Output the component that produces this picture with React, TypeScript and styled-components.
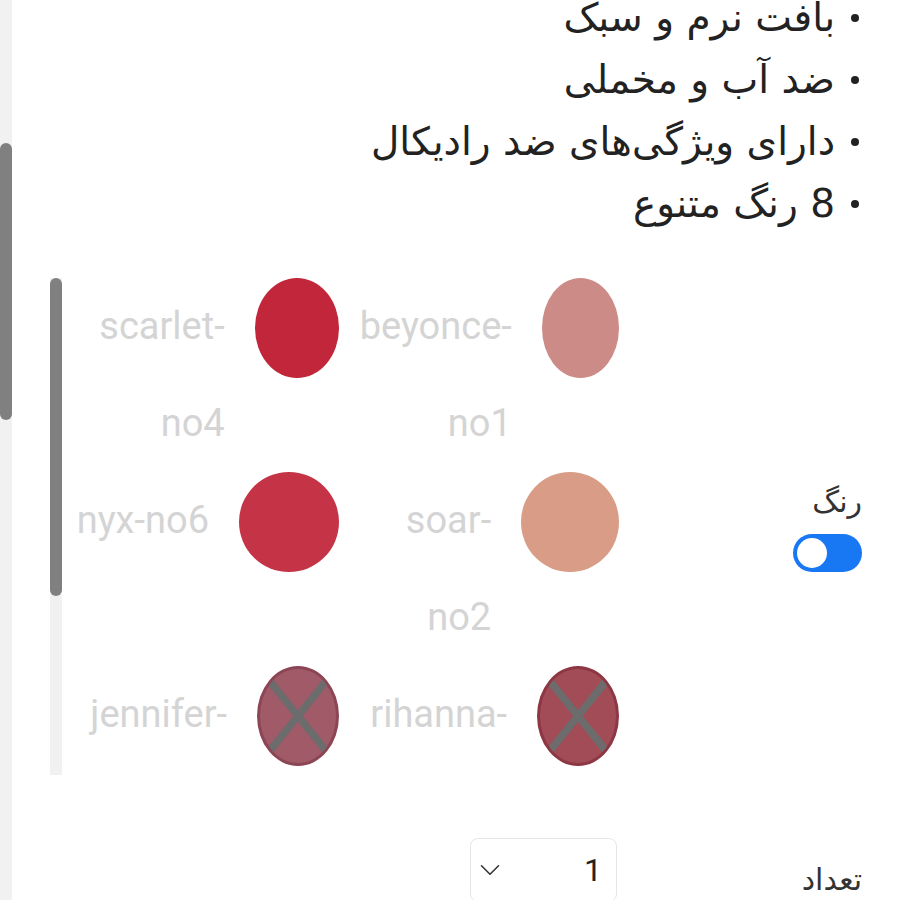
import React, { useCallback, useLayoutEffect, useRef, useState } from "react";
import styled, { createGlobalStyle, css } from "styled-components";
import { ChevronDown } from "lucide-react";

const GlobalStyle = createGlobalStyle`
  html, body {
    margin: 0;
    padding: 0;
    height: 100%;
    overflow: hidden;
    background: #ffffff;
  }
  #root { height: 100%; }
  *, *::before, *::after { box-sizing: border-box; }
`;

const hiddenNativeScrollbar = css`
  scrollbar-width: none;
  &::-webkit-scrollbar { display: none; }
`;

const Shell = styled.div`
  height: 100vh;
  display: flex;
  direction: rtl;
  font-family: "DejaVu Sans", "Noto Sans", sans-serif;
  color: #222222;
`;

const PageScroll = styled.div`
  position: relative;
  flex: 1;
  min-width: 0;
  overflow-y: auto;
  ${hiddenNativeScrollbar}
`;

const ScrollTrack = styled.div`
  flex: none;
  width: 12px;
  background: #f1f1f1;
  display: flex;
  flex-direction: column;
`;

const ScrollThumb = styled.div`
  width: 12px;
  border-radius: 6px;
  background: #808080;
`;

const Content = styled.main`
  min-height: 2924px;
  padding: 0 38px 40px;
  display: flex;
  flex-direction: column;
`;

const ProductHeader = styled.header`
  height: 452px;
  display: flex;
  flex-direction: column;
  gap: 20px;
  padding-top: 24px;
  overflow: hidden;
`;

const Gallery = styled.div`
  flex: 1;
  border-radius: 16px;
  background: #f6f6f6;
`;

const ProductTitle = styled.h1`
  margin: 0;
  font-size: 34px;
  font-weight: 700;
`;

const SectionHeading = styled.h2`
  margin: 0 0 8px;
  font-size: 28px;
  font-weight: 700;
  color: #333;
`;

const FeatureList = styled.ul`
  list-style: none;
  margin: 0;
  padding: 0;
  display: flex;
  flex-direction: column;
`;

const FeatureItem = styled.li`
  display: flex;
  align-items: center;
  gap: 16px;
  padding-right: 3px;
  font-size: 39px;
  line-height: 62px;
  color: #222;
`;

const Dot = styled.span`
  flex: none;
  width: 8px;
  height: 8px;
  border-radius: 50%;
  background: #222;
`;

const OptionsForm = styled.section`
  display: grid;
  grid-template-columns: 240px 1fr;
  row-gap: 63px;
  align-items: center;
  margin-top: 43px;
`;

const OptionLabelGroup = styled.div`
  display: flex;
  flex-direction: column;
  align-items: flex-start;
  gap: 12px;
`;

const OptionLabel = styled.span`
  font-size: 30px;
  line-height: 40px;
  color: #333;
`;

const Switch = styled.button<{ $on: boolean }>`
  width: 69px;
  height: 38px;
  padding: 4px;
  border: none;
  border-radius: 19px;
  background: ${(p) => (p.$on ? "#1877f2" : "#cccccc")};
  display: flex;
  justify-content: flex-end;
  align-items: center;
  cursor: pointer;
`;

const Knob = styled.span`
  width: 30px;
  height: 30px;
  border-radius: 50%;
  background: #ffffff;
`;

const ColorFrame = styled.div`
  height: 497px;
  display: flex;
`;

const ColorViewport = styled.div`
  flex: 1;
  min-width: 0;
  overflow-y: auto;
  ${hiddenNativeScrollbar}
`;

const ColorGrid = styled.div`
  display: grid;
  grid-template-columns: 1fr 1fr;
`;

const ColorCell = styled.div`
  display: flex;
  align-items: flex-start;
  gap: 30px;
  padding: 0 3px;
`;

const ColorName = styled.span`
  flex: 0 1 auto;
  min-width: 0;
  direction: ltr;
  text-align: right;
  font-family: Roboto, "Liberation Sans", sans-serif;
  font-size: 38px;
  line-height: 97px;
  color: #d4d4d4;
`;

const Swatch = styled.span<{ $color: string; $ring?: string }>`
  position: relative;
  flex: 0 1 100px;
  height: 100px;
  border-radius: 50%;
  background: ${(p) => p.$color};
  border: ${(p) => (p.$ring ? `3px solid ${p.$ring}` : "none")};
  overflow: hidden;
`;

const Cross = styled.svg`
  position: absolute;
  inset: 0;
  width: 100%;
  height: 100%;
`;

const QuantitySelect = styled.button`
  justify-self: start;
  margin-right: 5px;
  width: 147px;
  height: 64px;
  border: 1.5px solid #e6e6e6;
  border-radius: 8px;
  background: #fff;
  display: flex;
  align-items: center;
  justify-content: space-between;
  padding: 0 14px 0 2px;
  font-family: Roboto, "Liberation Sans", sans-serif;
  font-size: 32px;
  color: #222;
  cursor: pointer;
`;

const QuantityLabel = styled(OptionLabel)`
  padding-top: 20px;
`;

const AddToCart = styled.button`
  margin-top: 60px;
  height: 72px;
  border: none;
  border-radius: 12px;
  background: #1877f2;
  color: #fff;
  font-family: "DejaVu Sans", sans-serif;
  font-size: 28px;
`;

const DescriptionBlock = styled.p`
  margin: 60px 0 0;
  font-size: 26px;
  line-height: 1.8;
  color: #444;
`;

type ColorOption = { name: string; color: string; ring?: string; soldOut?: boolean };

const colors: ColorOption[] = [
  { name: "beyonce-no1", color: "#cc8b87" },
  { name: "scarlet-no4", color: "#c1263b" },
  { name: "soar-no2", color: "#d99c86" },
  { name: "nyx-no6", color: "#c43346" },
  { name: "rihanna-no3", color: "#a24c57", ring: "#8d3644", soldOut: true },
  { name: "jennifer-no5", color: "#a05a68", ring: "#8c4555", soldOut: true },
  { name: "adele-no7", color: "#b0454f" },
  { name: "taylor-no8", color: "#d6776f" },
];

const features = [
  "بافت نرم و سبک",
  "ضد آب و مخملی",
  "دارای ویژگی‌های ضد رادیکال",
  "8 رنگ متنوع",
];

type Thumb = { top: number; height: number };

function useThumb(ref: React.RefObject<HTMLDivElement | null>) {
  const [thumb, setThumb] = useState<Thumb>({ top: 0, height: 0 });
  const update = useCallback(() => {
    const el = ref.current;
    if (!el) return;
    const { scrollTop, scrollHeight, clientHeight } = el;
    if (scrollHeight <= clientHeight) {
      setThumb({ top: 0, height: 0 });
      return;
    }
    setThumb({
      top: (scrollTop / scrollHeight) * clientHeight,
      height: (clientHeight * clientHeight) / scrollHeight,
    });
  }, [ref]);
  return [thumb, update] as const;
}

export default function App() {
  const pageRef = useRef<HTMLDivElement>(null);
  const listRef = useRef<HTMLUListElement>(null);
  const colorRef = useRef<HTMLDivElement>(null);
  const [pageThumb, updatePageThumb] = useThumb(pageRef);
  const [colorThumb, updateColorThumb] = useThumb(colorRef);

  useLayoutEffect(() => {
    if (pageRef.current && listRef.current) {
      pageRef.current.scrollTop = listRef.current.offsetTop + 13;
    }
    updatePageThumb();
    updateColorThumb();
  }, [updatePageThumb, updateColorThumb]);

  return (
    <>
      <GlobalStyle />
      <Shell>
        <PageScroll ref={pageRef} onScroll={updatePageThumb}>
          <Content>
            <ProductHeader>
              <Gallery />
              <ProductTitle>رژ لب مایع مات</ProductTitle>
              <SectionHeading>ویژگی‌ها</SectionHeading>
            </ProductHeader>

            <FeatureList ref={listRef}>
              {features.map((f) => (
                <FeatureItem key={f}>
                  <Dot />
                  <span>{f}</span>
                </FeatureItem>
              ))}
            </FeatureList>

            <OptionsForm>
              <OptionLabelGroup>
                <OptionLabel>رنگ</OptionLabel>
                <Switch $on aria-label="رنگ">
                  <Knob />
                </Switch>
              </OptionLabelGroup>
              <ColorFrame>
                <ColorViewport ref={colorRef} onScroll={updateColorThumb}>
                  <ColorGrid>
                    {colors.map((c) => (
                      <ColorCell key={c.name}>
                        <Swatch $color={c.color} $ring={c.ring}>
                          {c.soldOut && (
                            <Cross viewBox="0 0 100 100" preserveAspectRatio="none">
                              <line x1="12" y1="12" x2="88" y2="88" stroke="#6c6c6c" strokeWidth="9" />
                              <line x1="88" y1="12" x2="12" y2="88" stroke="#6c6c6c" strokeWidth="9" />
                            </Cross>
                          )}
                        </Swatch>
                        <ColorName>{c.name}</ColorName>
                      </ColorCell>
                    ))}
                  </ColorGrid>
                </ColorViewport>
                <ScrollTrack>
                  <ScrollThumb style={{ marginTop: colorThumb.top, height: colorThumb.height }} />
                </ScrollTrack>
              </ColorFrame>

              <QuantityLabel>تعداد</QuantityLabel>
              <QuantitySelect>
                <span>1</span>
                <ChevronDown size={34} strokeWidth={1.1} color="#333" />
              </QuantitySelect>
            </OptionsForm>

            <AddToCart>افزودن به سبد خرید</AddToCart>
            <DescriptionBlock>
              این رژ لب با فرمولاسیون سبک و ماندگاری بالا، رنگی یکدست و مخملی به لب‌ها می‌بخشد.
            </DescriptionBlock>
          </Content>
        </PageScroll>
        <ScrollTrack>
          <ScrollThumb style={{ marginTop: pageThumb.top, height: pageThumb.height }} />
        </ScrollTrack>
      </Shell>
    </>
  );
}
